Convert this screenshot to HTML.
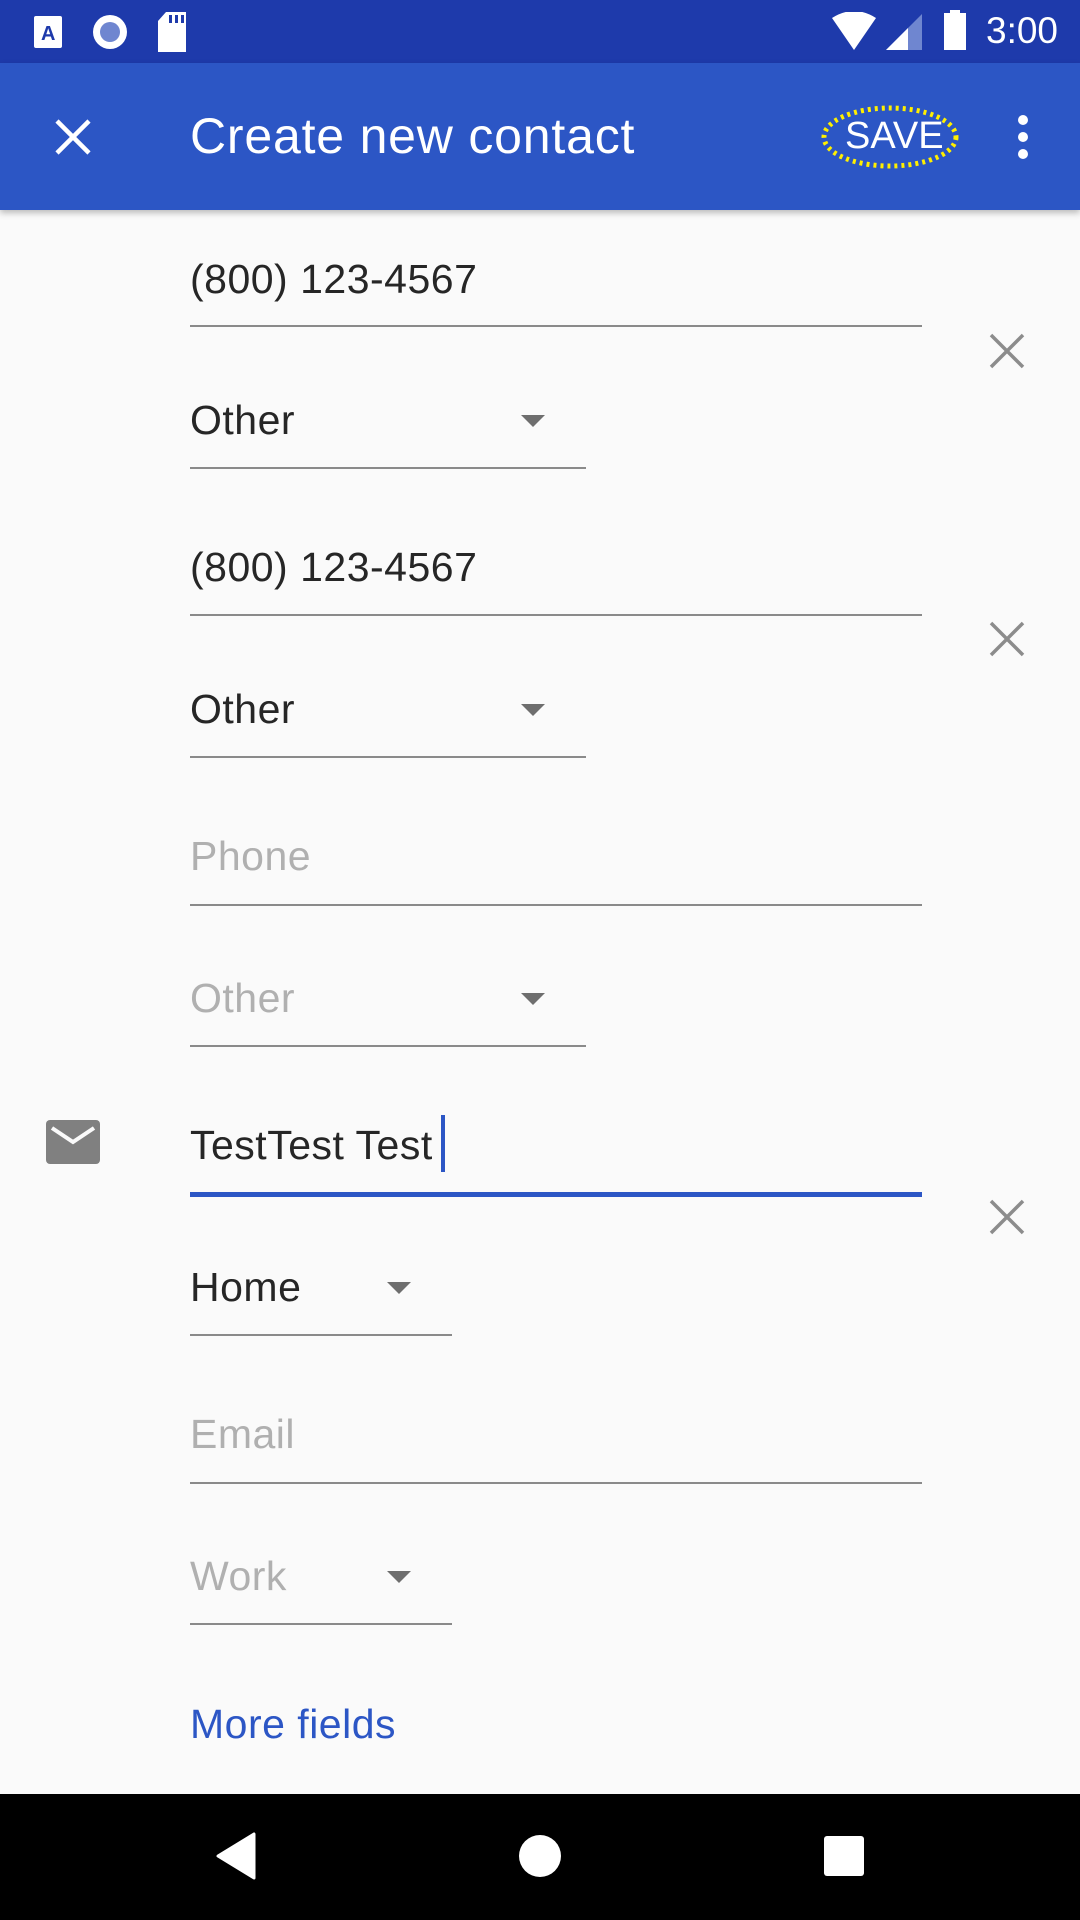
<!DOCTYPE html>
<html><head><meta charset="utf-8">
<style>
*{margin:0;padding:0;box-sizing:border-box}
body{width:1080px;height:1920px;background:#fafafa;position:relative;overflow:hidden;font-family:"Liberation Sans",sans-serif}
.abs{position:absolute}
.sb{left:0;top:0;width:1080px;height:63px;background:#1e3aab}
.ab{left:0;top:63px;width:1080px;height:147px;background:#2c56c5;box-shadow:0 3px 6px rgba(0,0,0,.25)}
.t{position:absolute;left:190px;font-size:41px;color:#262626;line-height:46px;letter-spacing:0.5px}
.h{color:#b0b0b0}
.ln{position:absolute;left:190px;height:2px;background:#8a8a8a}
.arr{position:absolute;width:0;height:0;border-left:12px solid transparent;border-right:12px solid transparent;border-top:12px solid #6e6e6e}
.x{position:absolute;width:40px;height:40px}
.nav{left:0;top:1794px;width:1080px;height:126px;background:#000}
</style></head><body>
<div class="abs sb"></div>
<svg class="abs" style="left:32px;top:14px" width="120" height="38">
<rect x="2" y="2" width="28" height="32" rx="2" fill="#fff"/><text x="9" y="26" font-size="20" font-weight="bold" fill="#1e3aab" font-family="Liberation Sans">A</text>
<circle cx="78" cy="18" r="17" fill="#fff"/><circle cx="78" cy="18" r="10" fill="#6f86d0"/>
</svg>
<svg class="abs" style="left:156px;top:12px" width="32" height="40"><path d="M10 0H30V40H2V9Z" fill="#fff"/><rect x="13" y="3" width="3" height="8" fill="#1e3aab"/><rect x="19" y="3" width="3" height="8" fill="#1e3aab"/><rect x="25" y="3" width="3" height="8" fill="#1e3aab"/></svg>
<svg class="abs" style="left:832px;top:12px" width="110" height="40">
<path d="M0 6Q22 -8 44 6L22 38Z" fill="#fff"/>
<path d="M54 38L90 2V38Z" fill="#6f86d0"/><path d="M54 38L76 16V38Z" fill="#fff"/>
</svg>
<svg class="abs" style="left:942px;top:10px" width="26" height="42"><rect x="8" y="0" width="10" height="4" fill="#fff"/><rect x="2" y="3" width="22" height="37" fill="#fff"/></svg>
<div class="abs" style="left:986px;top:10px;font-size:37px;color:#fff">3:00</div>

<div class="abs ab"></div>
<svg class="abs" style="left:54px;top:118px" width="38" height="38"><path d="M3 3L35 35M35 3L3 35" stroke="#fff" stroke-width="4.5"/></svg>
<div class="abs" style="left:190px;top:108px;font-size:50px;color:#fff;line-height:56px;letter-spacing:0.8px">Create new contact</div>
<svg class="abs" style="left:820px;top:104px" width="140" height="66"><ellipse cx="70" cy="33" rx="66" ry="29" fill="none" stroke="#ffef00" stroke-width="5" stroke-dasharray="3 4"/></svg>
<div class="abs" style="left:845px;top:114px;font-size:38px;color:#fff;line-height:44px">SAVE</div>
<svg class="abs" style="left:1010px;top:114px" width="26" height="46"><circle cx="13" cy="6" r="5" fill="#fff"/><circle cx="13" cy="23" r="5" fill="#fff"/><circle cx="13" cy="40" r="5" fill="#fff"/></svg>

<div class="t" style="top:256px">(800) 123-4567</div><div class="ln" style="top:325px;width:732px"></div>
<svg class="x" style="left:987px;top:331px"><path d="M4 4L36 36M36 4L4 36" stroke="#8c8c8c" stroke-width="3.5"/></svg>
<div class="t" style="top:397px">Other</div><div class="arr" style="left:521px;top:415px"></div><div class="ln" style="top:467px;width:396px"></div>

<div class="t" style="top:544px">(800) 123-4567</div><div class="ln" style="top:614px;width:732px"></div>
<svg class="x" style="left:987px;top:619px"><path d="M4 4L36 36M36 4L4 36" stroke="#8c8c8c" stroke-width="3.5"/></svg>
<div class="t" style="top:686px">Other</div><div class="arr" style="left:521px;top:704px"></div><div class="ln" style="top:756px;width:396px"></div>

<div class="t h" style="top:833px">Phone</div><div class="ln" style="top:904px;width:732px"></div>
<div class="t h" style="top:975px">Other</div><div class="arr" style="left:521px;top:993px"></div><div class="ln" style="top:1045px;width:396px"></div>

<svg class="abs" style="left:46px;top:1120px" width="54" height="44"><rect x="0" y="0" width="54" height="44" rx="4" fill="#808080"/><path d="M6 8L27 22L48 8" fill="none" stroke="#fafafa" stroke-width="4"/></svg>
<div class="t" style="top:1122px">TestTest Test</div>
<div class="abs" style="left:441px;top:1115px;width:4px;height:57px;background:#2c56c5"></div>
<div class="ln" style="top:1192px;width:732px;height:5px;background:#2c56c5"></div>
<svg class="x" style="left:987px;top:1197px"><path d="M4 4L36 36M36 4L4 36" stroke="#8c8c8c" stroke-width="3.5"/></svg>
<div class="t" style="top:1264px">Home</div><div class="arr" style="left:387px;top:1282px"></div><div class="ln" style="top:1334px;width:262px"></div>

<div class="t h" style="top:1411px">Email</div><div class="ln" style="top:1482px;width:732px"></div>
<div class="t h" style="top:1553px">Work</div><div class="arr" style="left:387px;top:1571px"></div><div class="ln" style="top:1623px;width:262px"></div>

<div class="t" style="top:1701px;color:#2c56c5">More fields</div>

<div class="abs nav"></div>
<svg class="abs" style="left:214px;top:1832px" width="44" height="48"><path d="M40 2V46L4 24Z" fill="#fff" stroke="#fff" stroke-width="3" stroke-linejoin="round"/></svg>
<div class="abs" style="left:519px;top:1835px;width:42px;height:42px;border-radius:50%;background:#fff"></div>
<div class="abs" style="left:824px;top:1836px;width:40px;height:40px;border-radius:3px;background:#fff"></div>
</body></html>
